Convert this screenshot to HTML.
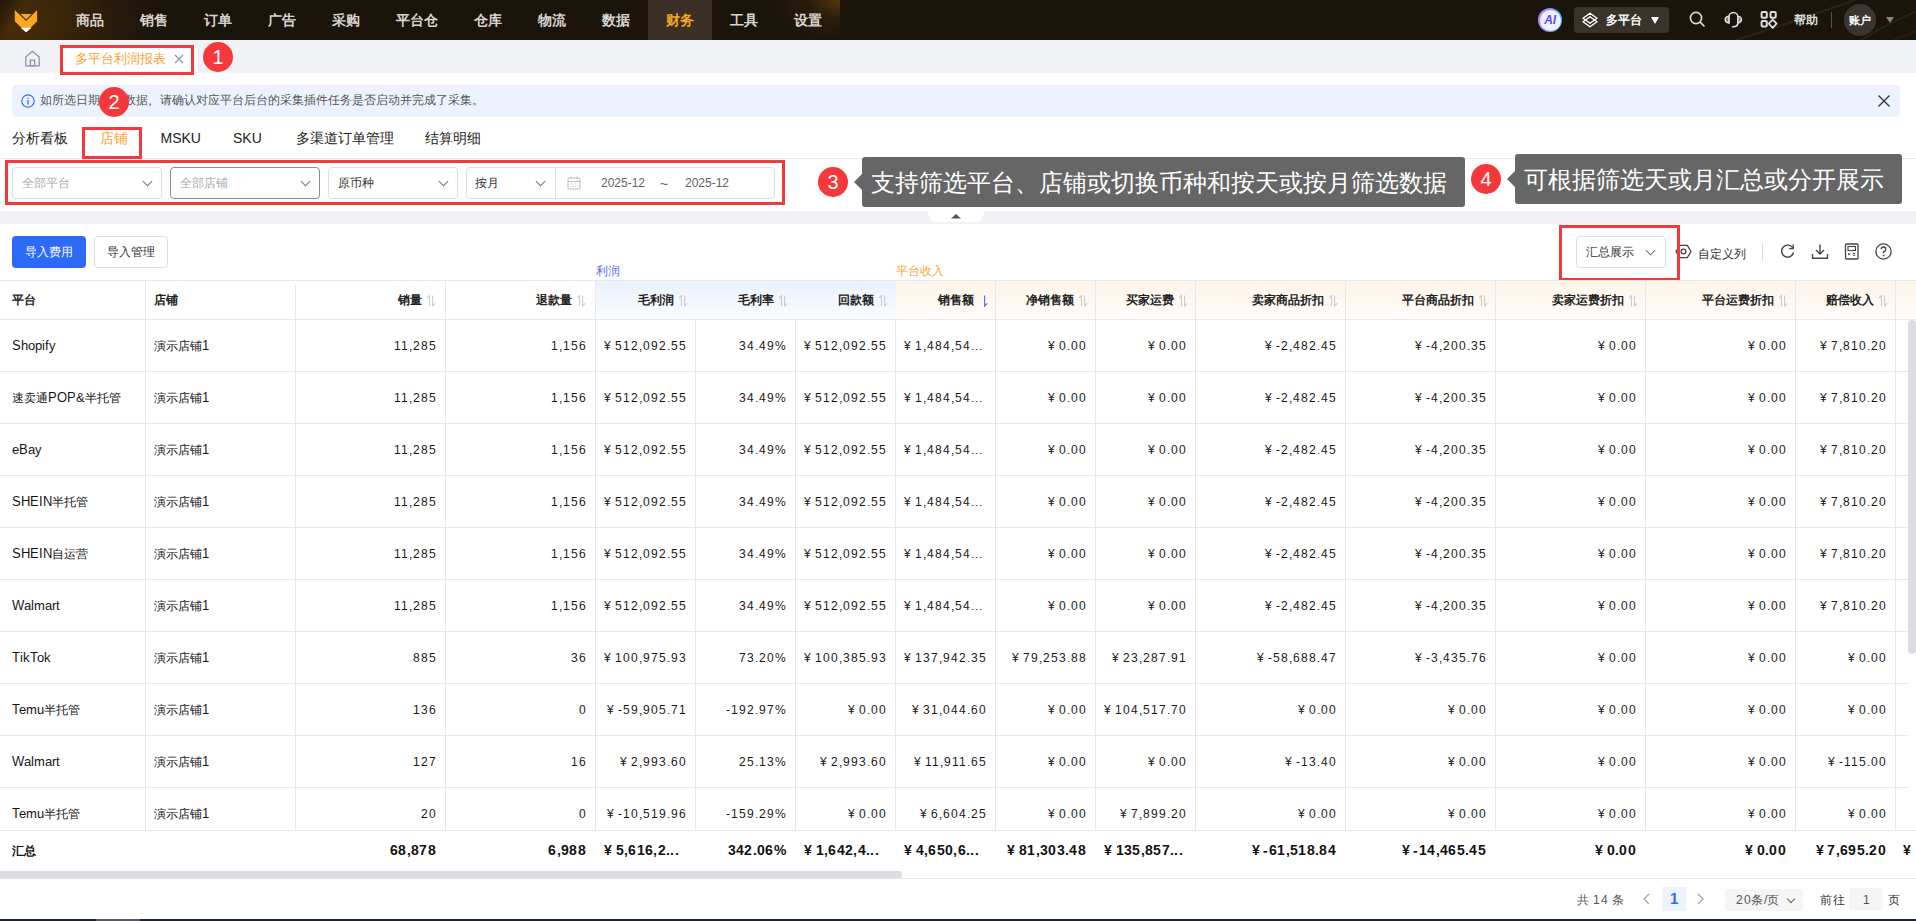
<!DOCTYPE html><html><head><meta charset="utf-8"><style>
@font-face{font-family:"LS";src:local("Liberation Sans");size-adjust:100%;}
@font-face{font-family:"LSL";src:local("Liberation Sans");size-adjust:110%;}
@font-face{font-family:"LS";src:local("Liberation Sans Bold");size-adjust:113%;font-weight:bold;}
*{box-sizing:border-box;margin:0;padding:0}
html,body{width:1916px;height:921px;overflow:hidden;background:#fff;font-family:"Liberation Sans",sans-serif;color:#222}
.abs{position:absolute}
#nav{position:absolute;left:0;top:0;width:1916px;height:40px;background:#1b140b;overflow:hidden}
#nav{background:linear-gradient(118deg,#1b140b 0px,#1f150a 6px,#3d2809 22px,#34220a 50px,#241809 95px,#1b140b 150px,#1b140b 100%)}
#nav .glow{position:absolute;left:-40px;top:-30px;width:200px;height:100px;background:radial-gradient(ellipse at 40% 60%,rgba(90,55,10,.35) 0%,rgba(27,20,11,0) 70%)}
#nav .glow2{position:absolute;left:740px;top:0;width:100px;height:40px;background:radial-gradient(ellipse 70px 45px at 100% 0%,rgba(95,60,15,.85) 0%,rgba(60,38,12,.4) 45%,rgba(27,20,11,0) 100%)}
.ni{position:absolute;top:0;height:40px;line-height:40px;font-size:14px;font-weight:bold;color:#d6d3ce;text-align:center}
.ni.act{background:#3a3026;color:#f5a623}
#tabbar{position:absolute;left:0;top:40px;width:1916px;height:33px;background:#f0f2f5}
.tab{position:absolute;left:60px;top:45px;width:138px;height:28px;background:#fff;border-radius:4px 6px 0 0}
.redbox{position:absolute;border:3px solid #f5383b}
.circ{position:absolute;width:30px;height:30px;border-radius:50%;background:#f5383b;color:#fff;font-size:20px;text-align:center;line-height:30px}
.tip{position:absolute;background:#666;color:#fff;font-size:24px;border-radius:3px;white-space:nowrap}
.tip:before{content:"";position:absolute;left:-8px;top:50%;margin-top:-8px;border-top:8px solid transparent;border-bottom:8px solid transparent;border-right:8px solid #666}
#alert{position:absolute;left:12px;top:85px;width:1888px;height:32px;background:#ecf3fe;border-radius:4px}
.stab{position:absolute;top:128px;font-size:14px;color:#222;line-height:20px}
.sel{position:absolute;height:32px;border:1px solid #dcdfe6;border-radius:4px;background:#fff;font-size:12px;line-height:30px;padding-left:9px;color:#a8abb2}
.chev{position:absolute;width:7px;height:7px;border-right:1.3px solid #777;border-bottom:1.3px solid #777;transform:rotate(45deg)}
#nav .streak{position:absolute;left:1640px;top:-20px;width:300px;height:80px;background:linear-gradient(160deg,rgba(0,0,0,0) 40%,rgba(255,255,255,.06) 50%,rgba(0,0,0,0) 60%)}
.glab{font-size:12px;line-height:17px}
.hl{height:1px;background:#e6e8ee}
.vl{width:1px;background:#e6e8ee}
.th{font-size:12px;font-weight:bold;line-height:18px;color:#222;white-space:nowrap;font-family:LS,sans-serif}
.td{font-size:12px;line-height:18px;color:#151515;white-space:nowrap;font-family:LS,sans-serif;word-spacing:-1px;letter-spacing:1px}
.td.b{font-weight:bold;color:#111;letter-spacing:0.35px}
.pg{font-size:12px;line-height:18px;white-space:nowrap;font-family:LS,sans-serif;letter-spacing:0.6px}
.td.l{letter-spacing:0;font-family:LSL,sans-serif}
</style></head><body>
<div id="nav"><div class="glow"></div><div class="glow2"></div>
<svg class="abs" style="left:0;top:0" width="50" height="40" viewBox="0 0 50 40">
<polygon points="14.8,9.9 26.1,21 37.1,9.9 37.1,21.3 26.1,32.2 14.8,21.3" fill="#fba823"/>
<polygon points="20.6,13.9 31.6,13.9 26.1,19.4" fill="#fba823"/>
<polygon points="20.6,27.7 31.6,27.7 26.1,32.2" fill="#fff"/>
</svg>
<div class="ni" style="left:58px;width:64px">商品</div>
<div class="ni" style="left:122px;width:64px">销售</div>
<div class="ni" style="left:186px;width:64px">订单</div>
<div class="ni" style="left:250px;width:64px">广告</div>
<div class="ni" style="left:314px;width:64px">采购</div>
<div class="ni" style="left:378px;width:78px">平台仓</div>
<div class="ni" style="left:456px;width:64px">仓库</div>
<div class="ni" style="left:520px;width:64px">物流</div>
<div class="ni" style="left:584px;width:64px">数据</div>
<div class="ni act" style="left:648px;width:64px">财务</div>
<div class="ni" style="left:712px;width:64px">工具</div>
<div class="ni" style="left:776px;width:64px">设置</div>
<div class="abs" style="left:1538px;top:8px;width:24px;height:24px;border-radius:50%;background:linear-gradient(100deg,#b78cff 0%,#8f8cff 50%,#2ec6ff 100%);padding:1.5px"><div style="width:21px;height:21px;border-radius:50%;background:#f1eefe;font:italic bold 12px/21px 'Liberation Sans',sans-serif;color:#5a4ff2;text-align:center;letter-spacing:-0.3px">AI</div></div>
<div class="abs" style="left:1574px;top:7px;width:95px;height:26px;border-radius:4px;background:#3a332b"></div>
<svg class="abs" style="left:1582px;top:12px" width="16" height="16" viewBox="0 0 16 16"><path d="M8 1.3 L15 6.3 L8 11.3 L1 6.3 Z" fill="none" stroke="#fff" stroke-width="1.4" stroke-linejoin="round"/><path d="M8 4.7 L15 9.7 L8 14.7 L1 9.7 Z" fill="none" stroke="#fff" stroke-width="1.4" stroke-linejoin="round"/></svg>
<div class="abs" style="left:1606px;top:0;height:40px;line-height:40px;font-size:12px;font-weight:bold;color:#fff">多平台</div>
<div class="abs" style="left:1651px;top:17px;width:0;height:0;border-left:4.5px solid transparent;border-right:4.5px solid transparent;border-top:7px solid #fff"></div>
<svg class="abs" style="left:1688px;top:11px" width="18" height="18" viewBox="0 0 18 18"><circle cx="8" cy="7" r="5.6" fill="none" stroke="#ddd" stroke-width="1.6"/><path d="M12.2 11.2 L16 15" stroke="#ddd" stroke-width="1.7" stroke-linecap="round"/></svg>
<svg class="abs" style="left:1723px;top:8px" width="20" height="22" viewBox="0 0 20 22"><path d="M5.9 15 V9 A4.5 4.5 0 0 1 14.9 9 V14.5 Q14.9 18.9 9.8 18.9" fill="none" stroke="#ddd" stroke-width="1.6" stroke-linecap="round"/><path d="M5.9 8.2 Q2.2 8.6 2.2 11.6 Q2.2 14.6 5.9 15 Z" fill="#777" stroke="#ddd" stroke-width="1.5" stroke-linejoin="round"/><path d="M14.9 8.2 Q18.4 8.6 18.4 11.6 Q18.4 14.6 14.9 15 Z" fill="#777" stroke="#ddd" stroke-width="1.5" stroke-linejoin="round"/></svg>
<svg class="abs" style="left:1759px;top:10px" width="20" height="20" viewBox="0 0 20 20"><rect x="2.6" y="2.1" width="5.2" height="5.6" rx="1" fill="none" stroke="#ddd" stroke-width="2"/><rect x="11.5" y="2.1" width="5.2" height="5.6" rx="1" fill="none" stroke="#ddd" stroke-width="2"/><rect x="2.6" y="11" width="5.2" height="5.6" rx="1" fill="none" stroke="#ddd" stroke-width="2"/><path d="M13.7 9.6 L17.6 13.7 L13.7 17.8 L9.8 13.7 Z" fill="none" stroke="#ddd" stroke-width="1.8" stroke-linejoin="round"/></svg>
<div class="abs" style="left:1794px;top:0;height:40px;line-height:40px;font-size:12px;font-weight:bold;color:#ddd">帮助</div>
<div class="abs" style="left:1831px;top:12px;width:1px;height:16px;background:#555"></div>
<div class="abs" style="left:1844px;top:4px;width:32px;height:32px;border-radius:50%;background:#3a352f;color:#fff;font-size:11px;line-height:32px;text-align:center;font-weight:bold">账户</div>
<div class="abs" style="left:1886px;top:17px;width:0;height:0;border-left:4.5px solid transparent;border-right:4.5px solid transparent;border-top:6px solid #8a8580"></div>
<svg class="abs" style="left:1700px;top:0" width="216" height="40" viewBox="0 0 216 40"><path d="M30 42 Q100 20 160 -2" fill="none" stroke="rgba(255,235,210,.07)" stroke-width="2.2"/><path d="M158 42 Q190 22 220 10" fill="none" stroke="rgba(255,235,210,.06)" stroke-width="2.2"/><path d="M190 42 Q205 35 220 30" fill="none" stroke="rgba(255,235,210,.05)" stroke-width="2"/></svg>
</div>
<div id="tabbar"></div>
<svg class="abs" style="left:24px;top:50px" width="17" height="17" viewBox="0 0 17 17"><path d="M1.8 15.8 V7 L8.5 1.3 L15.2 7 V15.8 Z" fill="none" stroke="#8c96a8" stroke-width="1.3" stroke-linejoin="round"/><rect x="6.3" y="10.2" width="4.4" height="5.6" fill="none" stroke="#8c96a8" stroke-width="1.3"/></svg>
<div class="tab"></div>
<div class="abs" style="left:75px;top:45px;height:28px;line-height:28px;font-size:13px;color:#f8a332">多平台利润报表</div>
<svg class="abs" style="left:174px;top:54px" width="10" height="10" viewBox="0 0 10 10"><path d="M1 1 L9 9 M9 1 L1 9" stroke="#8a97aa" stroke-width="1.2"/></svg>
<div class="redbox" style="left:60px;top:45px;width:134px;height:30px"></div>
<div class="circ" style="left:203px;top:42px">1</div>
<div id="alert"></div>
<svg class="abs" style="left:21px;top:94px" width="14" height="14" viewBox="0 0 14 14"><circle cx="7" cy="7" r="6.2" fill="none" stroke="#3a6ff7" stroke-width="1.2"/><rect x="6.4" y="6" width="1.3" height="4.5" fill="#3a6ff7"/><rect x="6.4" y="3.6" width="1.3" height="1.3" fill="#3a6ff7"/></svg>
<div class="abs" style="left:40px;top:92px;line-height:17px;font-size:12px;color:#555">如所选日期内无数据<span style="position:relative;left:-4px;top:1px">，</span>请确认对应平台后台的采集插件任务是否启动并完成了采集。</div>
<svg class="abs" style="left:1877px;top:94px" width="14" height="14" viewBox="0 0 14 14"><path d="M1.5 1.5 L12.5 12.5 M12.5 1.5 L1.5 12.5" stroke="#333" stroke-width="1.4"/></svg>
<div class="circ" style="left:99px;top:87px">2</div>
<div class="stab" style="left:12px;color:#222">分析看板</div>
<div class="stab" style="left:100px;color:#f8a332">店铺</div>
<div class="stab" style="left:160.5px;color:#222">MSKU</div>
<div class="stab" style="left:233px;color:#222">SKU</div>
<div class="stab" style="left:295.5px;color:#222">多渠道订单管理</div>
<div class="stab" style="left:425px;color:#222">结算明细</div>
<div class="abs" style="left:0;top:158px;width:1916px;height:1px;background:#ebedf0"></div>
<div class="redbox" style="left:82px;top:127px;width:60px;height:32px"></div>
<div class="sel" style="left:12px;top:167px;width:150px;border-color:#dcdfe6;color:#a8abb2">全部平台</div>
<div class="chev" style="left:144px;top:178px"></div>
<div class="sel" style="left:170px;top:167px;width:150px;border-color:#8c8c8c;color:#a8abb2">全部店铺</div>
<div class="chev" style="left:302px;top:178px"></div>
<div class="sel" style="left:328px;top:167px;width:130px;border-color:#dcdfe6;color:#333">原币种</div>
<div class="chev" style="left:440px;top:178px"></div>
<div class="sel" style="left:466px;top:167px;width:309px;color:#333"></div>
<div class="abs" style="left:555px;top:168px;width:1px;height:30px;background:#dcdfe6"></div>
<div class="abs" style="left:475px;top:167px;line-height:32px;font-size:12px;color:#333">按月</div>
<div class="chev" style="left:537px;top:178px"></div>
<svg class="abs" style="left:567px;top:176px" width="14" height="14" viewBox="0 0 14 14"><rect x="1" y="2" width="12" height="11" rx="1" fill="none" stroke="#b8bcc4" stroke-width="1"/><path d="M1 5.5 H13 M4 0.5 V3 M10 0.5 V3" stroke="#b8bcc4" stroke-width="1"/><path d="M3.5 8 H10.5 M3.5 10.5 H10.5" stroke="#b8bcc4" stroke-width="0.8" stroke-dasharray="1.2 1"/></svg>
<div class="abs" style="left:601px;top:167px;line-height:32px;font-size:12px;color:#606266">2025-12</div>
<div class="abs" style="left:660px;top:168px;line-height:32px;font-size:14px;color:#606266">~</div>
<div class="abs" style="left:685px;top:167px;line-height:32px;font-size:12px;color:#606266">2025-12</div>
<div class="redbox" style="left:5px;top:160px;width:780px;height:45px"></div>
<div class="circ" style="left:818px;top:167px">3</div>
<div class="tip" style="left:862px;top:157px;width:603px;height:50px;line-height:51px;padding-left:9px">支持筛选平台、店铺或切换币种和按天或按月筛选数据</div>
<div class="circ" style="left:1471px;top:164px">4</div>
<div class="tip" style="left:1515px;top:154px;width:387px;height:50px;line-height:51px;padding-left:9px">可根据筛选天或月汇总或分开展示</div>
<div class="abs" style="left:0;top:211px;width:1916px;height:13px;background:#f0f2f5"></div>
<svg class="abs" style="left:927px;top:211px" width="58" height="11" viewBox="0 0 58 11"><path d="M0 0 H58 L54 9 Q53 11 50 11 H8 Q5 11 4 9 Z" fill="#fff"/><path d="M24 7.5 L29 3 L34 7.5 Z" fill="#555"/></svg>
<div class="abs" style="left:12px;top:236px;width:74px;height:32px;border-radius:4px;background:#2d6bf6;color:#fff;font-size:12px;line-height:32px;text-align:center">导入费用</div>
<div class="abs" style="left:94px;top:236px;width:74px;height:32px;border-radius:4px;border:1px solid #dcdfe6;color:#333;font-size:12px;line-height:30px;text-align:center">导入管理</div>
<div class="sel" style="left:1576px;top:236px;width:90px;color:#333">汇总展示</div>
<div class="chev" style="left:1647px;top:247px"></div>
<svg class="abs" style="left:1675px;top:243px" width="17" height="17" viewBox="0 0 17 17"><path d="M4.7 2.3 H12.3 L16 8.5 L12.3 14.7 H4.7 L1 8.5 Z" fill="none" stroke="#444" stroke-width="1.3" stroke-linejoin="round"/><circle cx="8.5" cy="8.5" r="2.4" fill="none" stroke="#444" stroke-width="1.3"/></svg>
<div class="abs" style="left:1698px;top:245px;line-height:18px;font-size:12px;color:#333">自定义列</div>
<div class="abs" style="left:1762px;top:243px;width:1px;height:18px;background:#dcdfe6"></div>
<svg class="abs" style="left:1779px;top:243px" width="17" height="17" viewBox="0 0 17 17"><path d="M13.8 5 A6 6 0 1 0 14.5 9.5" fill="none" stroke="#444" stroke-width="1.4"/><path d="M14.2 1.5 V5.6 H10.2" fill="none" stroke="#444" stroke-width="1.4"/></svg>
<svg class="abs" style="left:1811px;top:243px" width="18" height="17" viewBox="0 0 18 17"><path d="M9 1.5 V11 M5 7 L9 11 L13 7" fill="none" stroke="#444" stroke-width="1.4"/><path d="M1.5 11 V15.3 H16.5 V11" fill="none" stroke="#444" stroke-width="1.4"/></svg>
<svg class="abs" style="left:1844px;top:243px" width="16" height="17" viewBox="0 0 16 17"><rect x="1.5" y="1" width="12.5" height="15" rx="1" fill="none" stroke="#444" stroke-width="1.3"/><rect x="4" y="3.5" width="7.5" height="4" fill="none" stroke="#444" stroke-width="1.1"/><path d="M4.2 10.2 L6.2 12.2 M6.2 10.2 L4.2 12.2 M8.8 10.4 H11.3 M8.8 12.2 H11.3" stroke="#444" stroke-width="1"/></svg>
<svg class="abs" style="left:1875px;top:243px" width="17" height="17" viewBox="0 0 17 17"><circle cx="8.5" cy="8.5" r="7.6" fill="none" stroke="#444" stroke-width="1.3"/><path d="M6.2 6.3 A2.3 2.3 0 1 1 8.5 8.6 V10.2" fill="none" stroke="#444" stroke-width="1.3"/><circle cx="8.5" cy="12.6" r="0.9" fill="#444"/></svg>
<div class="redbox" style="left:1559px;top:225px;width:121px;height:56px"></div>
<div class="abs glab" style="left:596px;top:263px;color:#5a6cf6">利润</div>
<div class="abs glab" style="left:896px;top:263px;color:#f9a53a">平台收入</div>
<div class="abs" style="left:596px;top:280px;width:300px;height:40px;background:linear-gradient(180deg,#eaf1fd 0%,#f4f8fe 60%,#fbfdff 100%)"></div>
<div class="abs" style="left:896px;top:280px;width:1020px;height:40px;background:linear-gradient(180deg,#fef4e8 0%,#fef9f3 60%,#fffdfa 100%)"></div>
<div class="abs hl" style="left:0;top:280px;width:1916px"></div>
<div class="abs hl" style="left:0;top:319px;width:1916px"></div>
<div class="abs th" style="left:12px;top:291px">平台</div>
<div class="abs th" style="left:154px;top:291px">店铺</div>
<div class="abs th" style="right:1494px;top:291px">销量</div>
<svg class="abs" style="left:426.5px;top:295px" width="10" height="12" viewBox="0 0 10 12"><path d="M2.5 11 V0.6 L0.2 2.9" fill="none" stroke="#c8ccd4" stroke-width="1.1"/><path d="M5.6 0.6 V11 L8.2 8.4" fill="none" stroke="#c8ccd4" stroke-width="1.1"/></svg>
<div class="abs th" style="right:1344px;top:291px">退款量</div>
<svg class="abs" style="left:576.5px;top:295px" width="10" height="12" viewBox="0 0 10 12"><path d="M2.5 11 V0.6 L0.2 2.9" fill="none" stroke="#c8ccd4" stroke-width="1.1"/><path d="M5.6 0.6 V11 L8.2 8.4" fill="none" stroke="#c8ccd4" stroke-width="1.1"/></svg>
<div class="abs th" style="right:1242.5px;top:291px">毛利润</div>
<svg class="abs" style="left:679px;top:295px" width="10" height="12" viewBox="0 0 10 12"><path d="M2.5 11 V0.6 L0.2 2.9" fill="none" stroke="#c8ccd4" stroke-width="1.1"/><path d="M5.6 0.6 V11 L8.2 8.4" fill="none" stroke="#c8ccd4" stroke-width="1.1"/></svg>
<div class="abs th" style="right:1142.5px;top:291px">毛利率</div>
<svg class="abs" style="left:779px;top:295px" width="10" height="12" viewBox="0 0 10 12"><path d="M2.5 11 V0.6 L0.2 2.9" fill="none" stroke="#c8ccd4" stroke-width="1.1"/><path d="M5.6 0.6 V11 L8.2 8.4" fill="none" stroke="#c8ccd4" stroke-width="1.1"/></svg>
<div class="abs th" style="right:1042.5px;top:291px">回款额</div>
<svg class="abs" style="left:879px;top:295px" width="10" height="12" viewBox="0 0 10 12"><path d="M2.5 11 V0.6 L0.2 2.9" fill="none" stroke="#c8ccd4" stroke-width="1.1"/><path d="M5.6 0.6 V11 L8.2 8.4" fill="none" stroke="#c8ccd4" stroke-width="1.1"/></svg>
<div class="abs th" style="right:942.5px;top:291px">销售额</div>
<svg class="abs" style="left:979px;top:295px" width="10" height="12" viewBox="0 0 10 12"><path d="M5.6 0.6 V11 L8.2 8.4" fill="none" stroke="#5a6cf6" stroke-width="1.2"/></svg>
<div class="abs th" style="right:842.5px;top:291px">净销售额</div>
<svg class="abs" style="left:1079px;top:295px" width="10" height="12" viewBox="0 0 10 12"><path d="M2.5 11 V0.6 L0.2 2.9" fill="none" stroke="#c8ccd4" stroke-width="1.1"/><path d="M5.6 0.6 V11 L8.2 8.4" fill="none" stroke="#c8ccd4" stroke-width="1.1"/></svg>
<div class="abs th" style="right:742.5px;top:291px">买家运费</div>
<svg class="abs" style="left:1179px;top:295px" width="10" height="12" viewBox="0 0 10 12"><path d="M2.5 11 V0.6 L0.2 2.9" fill="none" stroke="#c8ccd4" stroke-width="1.1"/><path d="M5.6 0.6 V11 L8.2 8.4" fill="none" stroke="#c8ccd4" stroke-width="1.1"/></svg>
<div class="abs th" style="right:592.5px;top:291px">卖家商品折扣</div>
<svg class="abs" style="left:1329px;top:295px" width="10" height="12" viewBox="0 0 10 12"><path d="M2.5 11 V0.6 L0.2 2.9" fill="none" stroke="#c8ccd4" stroke-width="1.1"/><path d="M5.6 0.6 V11 L8.2 8.4" fill="none" stroke="#c8ccd4" stroke-width="1.1"/></svg>
<div class="abs th" style="right:442.5px;top:291px">平台商品折扣</div>
<svg class="abs" style="left:1479px;top:295px" width="10" height="12" viewBox="0 0 10 12"><path d="M2.5 11 V0.6 L0.2 2.9" fill="none" stroke="#c8ccd4" stroke-width="1.1"/><path d="M5.6 0.6 V11 L8.2 8.4" fill="none" stroke="#c8ccd4" stroke-width="1.1"/></svg>
<div class="abs th" style="right:292.5px;top:291px">卖家运费折扣</div>
<svg class="abs" style="left:1629px;top:295px" width="10" height="12" viewBox="0 0 10 12"><path d="M2.5 11 V0.6 L0.2 2.9" fill="none" stroke="#c8ccd4" stroke-width="1.1"/><path d="M5.6 0.6 V11 L8.2 8.4" fill="none" stroke="#c8ccd4" stroke-width="1.1"/></svg>
<div class="abs th" style="right:142.5px;top:291px">平台运费折扣</div>
<svg class="abs" style="left:1779px;top:295px" width="10" height="12" viewBox="0 0 10 12"><path d="M2.5 11 V0.6 L0.2 2.9" fill="none" stroke="#c8ccd4" stroke-width="1.1"/><path d="M5.6 0.6 V11 L8.2 8.4" fill="none" stroke="#c8ccd4" stroke-width="1.1"/></svg>
<div class="abs th" style="right:42.5px;top:291px">赔偿收入</div>
<svg class="abs" style="left:1879px;top:295px" width="10" height="12" viewBox="0 0 10 12"><path d="M2.5 11 V0.6 L0.2 2.9" fill="none" stroke="#c8ccd4" stroke-width="1.1"/><path d="M5.6 0.6 V11 L8.2 8.4" fill="none" stroke="#c8ccd4" stroke-width="1.1"/></svg>
<div class="abs vl" style="left:145px;top:280px;height:40px"></div>
<div class="abs vl" style="left:445px;top:280px;height:40px"></div>
<div class="abs vl" style="left:595px;top:280px;height:40px"></div>
<div class="abs vl" style="left:995px;top:280px;height:40px"></div>
<div class="abs vl" style="left:1095px;top:280px;height:40px"></div>
<div class="abs vl" style="left:1195px;top:280px;height:40px"></div>
<div class="abs vl" style="left:1345px;top:280px;height:40px"></div>
<div class="abs vl" style="left:1495px;top:280px;height:40px"></div>
<div class="abs vl" style="left:1645px;top:280px;height:40px"></div>
<div class="abs vl" style="left:1795px;top:280px;height:40px"></div>
<div class="abs vl" style="left:1895px;top:280px;height:40px"></div>
<div class="abs vl" style="left:295px;top:285px;height:35px"></div>
<div class="abs" style="left:0;top:320px;width:1908px;height:510px;overflow:hidden">
<div class="abs td l" style="left:12px;top:17px">Shopify</div>
<div class="abs td l" style="left:154px;top:17px">演示店铺1</div>
<div class="abs td" style="right:1471px;top:17px">11,285</div>
<div class="abs td" style="right:1321px;top:17px">1,156</div>
<div class="abs td" style="right:1221px;top:17px">¥ 512,092.55</div>
<div class="abs td" style="right:1121px;top:17px">34.49%</div>
<div class="abs td" style="right:1021px;top:17px">¥ 512,092.55</div>
<div class="abs td" style="left:904px;top:17px">¥ 1,484,54...</div>
<div class="abs td" style="right:821px;top:17px">¥ 0.00</div>
<div class="abs td" style="right:721px;top:17px">¥ 0.00</div>
<div class="abs td" style="right:571px;top:17px">¥ -2,482.45</div>
<div class="abs td" style="right:421px;top:17px">¥ -4,200.35</div>
<div class="abs td" style="right:271px;top:17px">¥ 0.00</div>
<div class="abs td" style="right:121px;top:17px">¥ 0.00</div>
<div class="abs td" style="right:21px;top:17px">¥ 7,810.20</div>
<div class="abs hl" style="left:0;top:51px;width:1908px"></div>
<div class="abs td l" style="left:12px;top:69px">速卖通POP&amp;半托管</div>
<div class="abs td l" style="left:154px;top:69px">演示店铺1</div>
<div class="abs td" style="right:1471px;top:69px">11,285</div>
<div class="abs td" style="right:1321px;top:69px">1,156</div>
<div class="abs td" style="right:1221px;top:69px">¥ 512,092.55</div>
<div class="abs td" style="right:1121px;top:69px">34.49%</div>
<div class="abs td" style="right:1021px;top:69px">¥ 512,092.55</div>
<div class="abs td" style="left:904px;top:69px">¥ 1,484,54...</div>
<div class="abs td" style="right:821px;top:69px">¥ 0.00</div>
<div class="abs td" style="right:721px;top:69px">¥ 0.00</div>
<div class="abs td" style="right:571px;top:69px">¥ -2,482.45</div>
<div class="abs td" style="right:421px;top:69px">¥ -4,200.35</div>
<div class="abs td" style="right:271px;top:69px">¥ 0.00</div>
<div class="abs td" style="right:121px;top:69px">¥ 0.00</div>
<div class="abs td" style="right:21px;top:69px">¥ 7,810.20</div>
<div class="abs hl" style="left:0;top:103px;width:1908px"></div>
<div class="abs td l" style="left:12px;top:121px">eBay</div>
<div class="abs td l" style="left:154px;top:121px">演示店铺1</div>
<div class="abs td" style="right:1471px;top:121px">11,285</div>
<div class="abs td" style="right:1321px;top:121px">1,156</div>
<div class="abs td" style="right:1221px;top:121px">¥ 512,092.55</div>
<div class="abs td" style="right:1121px;top:121px">34.49%</div>
<div class="abs td" style="right:1021px;top:121px">¥ 512,092.55</div>
<div class="abs td" style="left:904px;top:121px">¥ 1,484,54...</div>
<div class="abs td" style="right:821px;top:121px">¥ 0.00</div>
<div class="abs td" style="right:721px;top:121px">¥ 0.00</div>
<div class="abs td" style="right:571px;top:121px">¥ -2,482.45</div>
<div class="abs td" style="right:421px;top:121px">¥ -4,200.35</div>
<div class="abs td" style="right:271px;top:121px">¥ 0.00</div>
<div class="abs td" style="right:121px;top:121px">¥ 0.00</div>
<div class="abs td" style="right:21px;top:121px">¥ 7,810.20</div>
<div class="abs hl" style="left:0;top:155px;width:1908px"></div>
<div class="abs td l" style="left:12px;top:173px">SHEIN半托管</div>
<div class="abs td l" style="left:154px;top:173px">演示店铺1</div>
<div class="abs td" style="right:1471px;top:173px">11,285</div>
<div class="abs td" style="right:1321px;top:173px">1,156</div>
<div class="abs td" style="right:1221px;top:173px">¥ 512,092.55</div>
<div class="abs td" style="right:1121px;top:173px">34.49%</div>
<div class="abs td" style="right:1021px;top:173px">¥ 512,092.55</div>
<div class="abs td" style="left:904px;top:173px">¥ 1,484,54...</div>
<div class="abs td" style="right:821px;top:173px">¥ 0.00</div>
<div class="abs td" style="right:721px;top:173px">¥ 0.00</div>
<div class="abs td" style="right:571px;top:173px">¥ -2,482.45</div>
<div class="abs td" style="right:421px;top:173px">¥ -4,200.35</div>
<div class="abs td" style="right:271px;top:173px">¥ 0.00</div>
<div class="abs td" style="right:121px;top:173px">¥ 0.00</div>
<div class="abs td" style="right:21px;top:173px">¥ 7,810.20</div>
<div class="abs hl" style="left:0;top:207px;width:1908px"></div>
<div class="abs td l" style="left:12px;top:225px">SHEIN自运营</div>
<div class="abs td l" style="left:154px;top:225px">演示店铺1</div>
<div class="abs td" style="right:1471px;top:225px">11,285</div>
<div class="abs td" style="right:1321px;top:225px">1,156</div>
<div class="abs td" style="right:1221px;top:225px">¥ 512,092.55</div>
<div class="abs td" style="right:1121px;top:225px">34.49%</div>
<div class="abs td" style="right:1021px;top:225px">¥ 512,092.55</div>
<div class="abs td" style="left:904px;top:225px">¥ 1,484,54...</div>
<div class="abs td" style="right:821px;top:225px">¥ 0.00</div>
<div class="abs td" style="right:721px;top:225px">¥ 0.00</div>
<div class="abs td" style="right:571px;top:225px">¥ -2,482.45</div>
<div class="abs td" style="right:421px;top:225px">¥ -4,200.35</div>
<div class="abs td" style="right:271px;top:225px">¥ 0.00</div>
<div class="abs td" style="right:121px;top:225px">¥ 0.00</div>
<div class="abs td" style="right:21px;top:225px">¥ 7,810.20</div>
<div class="abs hl" style="left:0;top:259px;width:1908px"></div>
<div class="abs td l" style="left:12px;top:277px">Walmart</div>
<div class="abs td l" style="left:154px;top:277px">演示店铺1</div>
<div class="abs td" style="right:1471px;top:277px">11,285</div>
<div class="abs td" style="right:1321px;top:277px">1,156</div>
<div class="abs td" style="right:1221px;top:277px">¥ 512,092.55</div>
<div class="abs td" style="right:1121px;top:277px">34.49%</div>
<div class="abs td" style="right:1021px;top:277px">¥ 512,092.55</div>
<div class="abs td" style="left:904px;top:277px">¥ 1,484,54...</div>
<div class="abs td" style="right:821px;top:277px">¥ 0.00</div>
<div class="abs td" style="right:721px;top:277px">¥ 0.00</div>
<div class="abs td" style="right:571px;top:277px">¥ -2,482.45</div>
<div class="abs td" style="right:421px;top:277px">¥ -4,200.35</div>
<div class="abs td" style="right:271px;top:277px">¥ 0.00</div>
<div class="abs td" style="right:121px;top:277px">¥ 0.00</div>
<div class="abs td" style="right:21px;top:277px">¥ 7,810.20</div>
<div class="abs hl" style="left:0;top:311px;width:1908px"></div>
<div class="abs td l" style="left:12px;top:329px">TikTok</div>
<div class="abs td l" style="left:154px;top:329px">演示店铺1</div>
<div class="abs td" style="right:1471px;top:329px">885</div>
<div class="abs td" style="right:1321px;top:329px">36</div>
<div class="abs td" style="right:1221px;top:329px">¥ 100,975.93</div>
<div class="abs td" style="right:1121px;top:329px">73.20%</div>
<div class="abs td" style="right:1021px;top:329px">¥ 100,385.93</div>
<div class="abs td" style="right:921px;top:329px">¥ 137,942.35</div>
<div class="abs td" style="right:821px;top:329px">¥ 79,253.88</div>
<div class="abs td" style="right:721px;top:329px">¥ 23,287.91</div>
<div class="abs td" style="right:571px;top:329px">¥ -58,688.47</div>
<div class="abs td" style="right:421px;top:329px">¥ -3,435.76</div>
<div class="abs td" style="right:271px;top:329px">¥ 0.00</div>
<div class="abs td" style="right:121px;top:329px">¥ 0.00</div>
<div class="abs td" style="right:21px;top:329px">¥ 0.00</div>
<div class="abs hl" style="left:0;top:363px;width:1908px"></div>
<div class="abs td l" style="left:12px;top:381px">Temu半托管</div>
<div class="abs td l" style="left:154px;top:381px">演示店铺1</div>
<div class="abs td" style="right:1471px;top:381px">136</div>
<div class="abs td" style="right:1321px;top:381px">0</div>
<div class="abs td" style="right:1221px;top:381px">¥ -59,905.71</div>
<div class="abs td" style="right:1121px;top:381px">-192.97%</div>
<div class="abs td" style="right:1021px;top:381px">¥ 0.00</div>
<div class="abs td" style="right:921px;top:381px">¥ 31,044.60</div>
<div class="abs td" style="right:821px;top:381px">¥ 0.00</div>
<div class="abs td" style="right:721px;top:381px">¥ 104,517.70</div>
<div class="abs td" style="right:571px;top:381px">¥ 0.00</div>
<div class="abs td" style="right:421px;top:381px">¥ 0.00</div>
<div class="abs td" style="right:271px;top:381px">¥ 0.00</div>
<div class="abs td" style="right:121px;top:381px">¥ 0.00</div>
<div class="abs td" style="right:21px;top:381px">¥ 0.00</div>
<div class="abs hl" style="left:0;top:415px;width:1908px"></div>
<div class="abs td l" style="left:12px;top:433px">Walmart</div>
<div class="abs td l" style="left:154px;top:433px">演示店铺1</div>
<div class="abs td" style="right:1471px;top:433px">127</div>
<div class="abs td" style="right:1321px;top:433px">16</div>
<div class="abs td" style="right:1221px;top:433px">¥ 2,993.60</div>
<div class="abs td" style="right:1121px;top:433px">25.13%</div>
<div class="abs td" style="right:1021px;top:433px">¥ 2,993.60</div>
<div class="abs td" style="right:921px;top:433px">¥ 11,911.65</div>
<div class="abs td" style="right:821px;top:433px">¥ 0.00</div>
<div class="abs td" style="right:721px;top:433px">¥ 0.00</div>
<div class="abs td" style="right:571px;top:433px">¥ -13.40</div>
<div class="abs td" style="right:421px;top:433px">¥ 0.00</div>
<div class="abs td" style="right:271px;top:433px">¥ 0.00</div>
<div class="abs td" style="right:121px;top:433px">¥ 0.00</div>
<div class="abs td" style="right:21px;top:433px">¥ -115.00</div>
<div class="abs hl" style="left:0;top:467px;width:1908px"></div>
<div class="abs td l" style="left:12px;top:485px">Temu半托管</div>
<div class="abs td l" style="left:154px;top:485px">演示店铺1</div>
<div class="abs td" style="right:1471px;top:485px">20</div>
<div class="abs td" style="right:1321px;top:485px">0</div>
<div class="abs td" style="right:1221px;top:485px">¥ -10,519.96</div>
<div class="abs td" style="right:1121px;top:485px">-159.29%</div>
<div class="abs td" style="right:1021px;top:485px">¥ 0.00</div>
<div class="abs td" style="right:921px;top:485px">¥ 6,604.25</div>
<div class="abs td" style="right:821px;top:485px">¥ 0.00</div>
<div class="abs td" style="right:721px;top:485px">¥ 7,899.20</div>
<div class="abs td" style="right:571px;top:485px">¥ 0.00</div>
<div class="abs td" style="right:421px;top:485px">¥ 0.00</div>
<div class="abs td" style="right:271px;top:485px">¥ 0.00</div>
<div class="abs td" style="right:121px;top:485px">¥ 0.00</div>
<div class="abs td" style="right:21px;top:485px">¥ 0.00</div>
<div class="abs vl" style="left:145px;top:0;height:510px"></div>
<div class="abs vl" style="left:295px;top:0;height:510px"></div>
<div class="abs vl" style="left:445px;top:0;height:510px"></div>
<div class="abs vl" style="left:595px;top:0;height:510px"></div>
<div class="abs vl" style="left:695px;top:0;height:510px"></div>
<div class="abs vl" style="left:795px;top:0;height:510px"></div>
<div class="abs vl" style="left:895px;top:0;height:510px"></div>
<div class="abs vl" style="left:995px;top:0;height:510px"></div>
<div class="abs vl" style="left:1095px;top:0;height:510px"></div>
<div class="abs vl" style="left:1195px;top:0;height:510px"></div>
<div class="abs vl" style="left:1345px;top:0;height:510px"></div>
<div class="abs vl" style="left:1495px;top:0;height:510px"></div>
<div class="abs vl" style="left:1645px;top:0;height:510px"></div>
<div class="abs vl" style="left:1795px;top:0;height:510px"></div>
<div class="abs vl" style="left:1895px;top:0;height:510px"></div>
</div>
<div class="abs hl" style="left:0;top:830px;width:1916px"></div>
<div class="abs td b" style="left:12px;top:842px">汇总</div>
<div class="abs td b" style="right:1480px;top:842px">68,878</div>
<div class="abs td b" style="right:1330px;top:842px">6,988</div>
<div class="abs td b" style="left:604px;top:842px">¥ 5,616,2...</div>
<div class="abs td b" style="right:1130px;top:842px">342.06%</div>
<div class="abs td b" style="left:804px;top:842px">¥ 1,642,4...</div>
<div class="abs td b" style="left:904px;top:842px">¥ 4,650,6...</div>
<div class="abs td b" style="right:830px;top:842px">¥ 81,303.48</div>
<div class="abs td b" style="left:1104px;top:842px">¥ 135,857...</div>
<div class="abs td b" style="right:580px;top:842px">¥ -61,518.84</div>
<div class="abs td b" style="right:430px;top:842px">¥ -14,465.45</div>
<div class="abs td b" style="right:280px;top:842px">¥ 0.00</div>
<div class="abs td b" style="right:130px;top:842px">¥ 0.00</div>
<div class="abs td b" style="right:30px;top:842px">¥ 7,695.20</div>
<div class="abs td b" style="left:1903px;top:842px">¥</div>
<div class="abs" style="left:0;top:871px;width:902px;height:8px;border-radius:0 4px 4px 0;background:#dcdde1"></div>
<div class="abs hl" style="left:0;top:878px;width:1916px"></div>
<div class="abs" style="left:1908px;top:320px;width:8px;height:334px;border-radius:4px;background:#dcdde1"></div>
<div class="abs pg" style="left:1577px;top:891px;color:#555">共 14 条</div>
<svg class="abs" style="left:1642px;top:893px" width="9" height="12" viewBox="0 0 9 12"><path d="M7 1 L2 6 L7 11" fill="none" stroke="#a0a4ab" stroke-width="1.2"/></svg>
<div class="abs" style="left:1662px;top:887px;width:24px;height:24px;background:#ecf3fe;color:#2d6bf6;font-weight:bold;font-size:13px;line-height:24px;text-align:center;font-family:LS,sans-serif">1</div>
<svg class="abs" style="left:1696px;top:893px" width="9" height="12" viewBox="0 0 9 12"><path d="M2 1 L7 6 L2 11" fill="none" stroke="#a0a4ab" stroke-width="1.2"/></svg>
<div class="abs" style="left:1725px;top:889px;width:78px;height:22px;background:#f5f5f5;border-radius:3px"></div>
<div class="abs pg" style="left:1736px;top:891px;color:#555">20条/页</div>
<div class="chev" style="left:1788px;top:896px;width:6px;height:6px;border-color:#666"></div>
<div class="abs pg" style="left:1820px;top:891px;color:#333">前往</div>
<div class="abs" style="left:1849px;top:888px;width:34px;height:22px;background:#f5f5f5;border-radius:3px"></div>
<div class="abs pg" style="left:1863px;top:891px;color:#555">1</div>
<div class="abs pg" style="left:1888px;top:891px;color:#333">页</div>
<div class="abs" style="left:0;top:919px;width:1916px;height:2px;background:#1c2535"></div>
<div class="abs" style="left:96px;top:919px;width:44px;height:2px;background:#555c66"></div>
</body></html>
